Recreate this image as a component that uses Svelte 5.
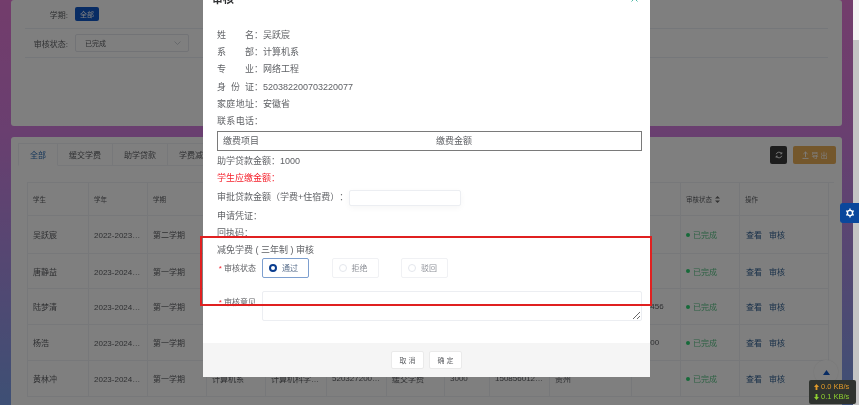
<script>
  const tabs = ['全部', '缓交学费', '助学贷款', '学费减免'];
  const heads = ['学生', '学年', '学期', '', '', '', '', '', '', '', ''];
  const rows = [
    { h: 38, c: ['吴跃宸', '2022-2023学年', '第二学期', '', '', '', '', '', '', '', ''] },
    { h: 35, c: ['唐静益', '2023-2024学年', '第一学期', '', '', '', '', '', '', '', ''] },
    { h: 36, c: ['陆梦清', '2023-2024学年', '第一学期', '', '', '', '', '', '', '', '123456'] },
    { h: 36, c: ['杨浩', '2023-2024学年', '第一学期', '', '', '', '', '', '', '', '10000'] },
    { h: 36, c: ['黄林冲', '2023-2024学年', '第一学期', '计算机系', '计算机科学与技术', '520327200012345678', '缓交学费', '3000', '15085601234567', '贵州', ''] }
  ];
  const info = [
    ['姓名', '吴跃宸'],
    ['系部', '计算机系'],
    ['专业', '网络工程'],
    ['身份证', '520382200703220077'],
    ['家庭地址', '安徽省'],
    ['联系电话', '']
  ];
  const options = ['通过', '拒绝', '驳回'];
</script>

<div class="page">
  <div class="main">
    <section class="card filters">
      <div class="filter-row">
        <span class="filter-label">学期:</span>
        <span class="chip">全部</span>
      </div>
      <div class="filter-row">
        <span class="filter-label">审核状态:</span>
        <span class="select">
          已完成
          <svg width="7" height="4" viewBox="0 0 7 4"><path d="M.5.5l3 3 3-3" fill="none" stroke="#c0c4cc" stroke-width=".8" /></svg>
        </span>
      </div>
    </section>

    <section class="card list">
      <div class="toolbar">
        <div class="tabs">
          {#each tabs as tab, i}
            <span class="tab" class:active={i === 0}>{tab}</span>
          {/each}
        </div>
        <div class="tools">
          <span class="refresh">
            <svg width="8" height="8" viewBox="0 0 8 8" fill="none" stroke="#fff" stroke-width=".9">
              <path d="M1.2 3.2A3 3 0 0 1 6.6 2.6M6.8 4.8A3 3 0 0 1 1.4 5.4" />
              <path d="M6.8 1.2v1.6H5.2M1.2 6.8V5.2h1.6" />
            </svg>
          </span>
          <span class="export">
            <svg width="7" height="8" viewBox="0 0 7 8" fill="none" stroke="#fff" stroke-width=".9"><path d="M3.5 6V1M1.4 3l2.1-2 2.1 2M.5 7.4h6" /></svg>
            导 出
          </span>
        </div>
      </div>

      <div class="table">
        <div class="tr head">
          {#each heads as h}
            <div class="td">{h}</div>
          {/each}
          <div class="td">
            审核状态
            <svg width="5" height="7" viewBox="0 0 5 7" fill="#666"><path d="M2.5 0L5 2.6H0zM2.5 7L0 4.4h5z" /></svg>
          </div>
          <div class="td">操作</div>
        </div>
        {#each rows as row}
          <div class="tr" style="height: {row.h}px">
            {#each row.c as cell}
              <div class="td"><span class="clip">{cell}</span></div>
            {/each}
            <div class="td"><i class="dot"></i><span class="done">已完成</span></div>
            <div class="td actions"><span>查看</span><span>审核</span></div>
          </div>
        {/each}
      </div>
    </section>

    <button class="back-top" aria-label="回到顶部">
      <svg width="7" height="5" viewBox="0 0 7 5"><path d="M3.5 0L7 5H0z" fill="#1058c8" /></svg>
    </button>

    <div class="mask"></div>

    <div class="modal">
      <header class="modal-head">
        <strong>审核</strong>
        <svg width="7" height="7" viewBox="0 0 7 7"><path d="M.5.5l6 6M6.5.5l-6 6" stroke="#4fb8a6" stroke-width="1" /></svg>
      </header>
      <div class="modal-body">
        {#each info as [k, v]}
          <div class="line"><span class="key">{k}</span>：{v}</div>
        {/each}
        <div class="fee-table">
          <span class="fee-a">缴费项目</span>
          <span>缴费金额</span>
        </div>
        <div class="line">助学贷款金额：1000</div>
        <div class="line red">学生应缴金额：</div>
        <div class="line approve"><span class="approve-label">审批贷款金额（学费+住宿费）：</span><input class="amount" /></div>
        <div class="line">申请凭证：</div>
        <div class="line">回执码：</div>
        <div class="line section">减免学费 ( 三年制 ) 审核</div>
        <div class="form-row">
          <span class="form-label"><b>*</b> 审核状态</span>
          <div class="radios">
            {#each options as o, i}
              <span class="radio" class:checked={i === 0}><i></i>{o}</span>
            {/each}
          </div>
        </div>
        <div class="form-row opinion">
          <span class="form-label"><b>*</b> 审核意见</span>
          <textarea></textarea>
        </div>
      </div>
      <footer class="modal-foot">
        <button>取 消</button>
        <button>确 定</button>
      </footer>
    </div>

    <div class="annotation"></div>
  </div>

  <div class="scrollbar"><div class="thumb"></div></div>

  <div class="gear">
    <svg width="10" height="10" viewBox="0 0 10 10">
      <circle cx="5" cy="5" r="2.6" fill="none" stroke="#fff" stroke-width="1.4" />
      <path d="M5 .6v1.6M5 7.8v1.6M1.2 2.8l1.4.8M7.4 6.4l1.4.8M1.2 7.2l1.4-.8M7.4 3.6l1.4-.8" stroke="#fff" stroke-width="1.3" />
    </svg>
  </div>

  <div class="speed">
    <div class="up"><svg width="5" height="6" viewBox="0 0 5 6"><path d="M2.5 0L5 3H3.4v3H1.6V3H0z" /></svg>0.0 KB/s</div>
    <div class="down"><svg width="5" height="6" viewBox="0 0 5 6"><path d="M2.5 6L0 3h1.6V0h1.8v3H5z" /></svg>0.1 KB/s</div>
  </div>
</div>

<style>
  :global(body) {
    overflow: hidden;
  }

  .page {
    display: flex;
    position: relative;
    height: 405px;
    overflow: hidden;
    font-family: "Liberation Sans", "Noto Sans CJK SC", sans-serif;
    color: #606266;
    filter: blur(.3px);
  }

  .main {
    flex: 1;
    position: relative;
    padding: 0 11px;
    overflow: hidden;
    background: linear-gradient(180deg, #e67ad8 0, #d47ee0 130px, #7ca0ea 405px);
  }

  .card {
    background: #fff;
    border-radius: 3px;
  }

  .filters {
    height: 126px;
    padding: 0 14px;
    box-sizing: border-box;
  }

  .filter-row {
    display: flex;
    align-items: center;
    gap: 7px;
    height: 29px;
    border-bottom: 1px solid #ebeef5;
    box-sizing: border-box;
  }

  .filter-label {
    width: 43px;
    flex: none;
    font-size: 8px;
    text-align: right;
    white-space: nowrap;
  }

  .chip {
    display: flex;
    align-items: center;
    justify-content: center;
    width: 24px;
    height: 14px;
    border-radius: 2px;
    background: #1058c8;
    color: #fff;
    font-size: 7px;
  }

  .select {
    display: flex;
    align-items: center;
    justify-content: space-between;
    width: 114px;
    height: 18px;
    padding: 0 7px 0 9px;
    border: 1px solid #e4e7ed;
    border-radius: 2px;
    box-sizing: border-box;
    font-size: 7px;
  }

  .list {
    height: 300px;
    margin-top: 11px;
    padding: 6px 6px 0 7px;
    box-sizing: border-box;
  }

  .toolbar {
    display: flex;
    justify-content: space-between;
    align-items: center;
    height: 23px;
  }

  .tabs {
    display: flex;
    height: 100%;
  }

  .tab {
    display: flex;
    align-items: center;
    padding: 0 11px;
    border: 1px solid #eef0f5;
    border-left: none;
    box-sizing: border-box;
    font-size: 8px;
    white-space: nowrap;
  }

  .tab.active {
    border-left: 1px solid #eef0f5;
    border-bottom-color: transparent;
    color: #2f6fb5;
  }

  .tools {
    display: flex;
    gap: 6px;
  }

  .refresh,
  .export {
    display: flex;
    align-items: center;
    justify-content: center;
    height: 18px;
    border-radius: 2px;
  }

  .refresh {
    width: 17px;
    background: #3a3a3a;
  }

  .export {
    gap: 3px;
    width: 43px;
    background: #e6a03c;
    color: #fff;
    font-size: 7px;
    opacity: .85;
  }

  .table {
    margin: 16px 2px 0 9px;
    border-top: 1px solid #eef0f5;
    border-left: 1px solid #eef0f5;
  }

  .tr {
    display: grid;
    grid-template-columns: 61px 59px 59px 59px 61px 60px 58px 45px 60px 82px 49px 59px 89px;
    height: 36px;
    box-sizing: border-box;
    font-size: 8px;
  }

  .tr.head {
    height: 33px;
    font-size: 6.5px;
  }

  .td {
    display: flex;
    align-items: center;
    gap: 3px;
    min-width: 0;
    padding: 0 5px;
    border-right: 1px solid #eef0f5;
    border-bottom: 1px solid #eef0f5;
    box-sizing: border-box;
    white-space: nowrap;
  }

  .clip {
    overflow: hidden;
    text-overflow: ellipsis;
  }

  .dot {
    width: 4px;
    height: 4px;
    border-radius: 50%;
    background: #2ed573;
  }

  .done {
    color: #5fc48a;
  }

  .actions {
    gap: 7px;
    padding-left: 6px;
    color: #2f5f92;
  }

  .back-top {
    position: absolute;
    right: 15px;
    top: 360px;
    display: flex;
    align-items: center;
    justify-content: center;
    width: 24px;
    height: 24px;
    padding: 0;
    border: none;
    border-radius: 50%;
    background: #fff;
    box-shadow: 0 0 2px rgba(0, 0, 0, .1);
  }

  .mask {
    position: absolute;
    inset: 0;
    background: rgba(0, 0, 0, .5);
  }

  .modal {
    position: absolute;
    left: 203px;
    top: -13px;
    display: flex;
    flex-direction: column;
    width: 447px;
    height: 390px;
    background: #fff;
  }

  .modal-head {
    display: flex;
    justify-content: space-between;
    align-items: center;
    height: 28px;
    padding: 0 12px 6px 9px;
    flex: none;
    box-sizing: border-box;
    font-size: 11px;
    color: #303133;
  }

  .modal-body {
    flex: 1;
    padding: 11.5px 8px 0 14px;
    font-size: 9px;
  }

  .line {
    height: 17.4px;
    line-height: 17.4px;
    white-space: nowrap;
  }

  .key {
    display: inline-block;
    width: 37px;
    text-align-last: justify;
  }

  .red {
    color: #f5222d;
  }

  .fee-table {
    display: flex;
    align-items: center;
    height: 20px;
    margin: 0 0 2.2px;
    padding: 0 5px;
    border: 1px solid #7a7a7a;
    box-sizing: border-box;
  }

  .fee-a {
    width: 213px;
  }

  .approve {
    display: flex;
    align-items: center;
    height: 20px;
  }

  .approve-label {
    width: 132px;
    flex: none;
    text-spacing-trim: space-all;
  }

  .amount {
    width: 112px;
    height: 16px;
    padding: 0;
    border: 1px solid #eceef2;
    border-radius: 2px;
    box-sizing: border-box;
    outline: none;
    box-shadow: 0 2px 6px rgba(0, 0, 0, .04);
  }

  .section {
    height: 15.4px;
    line-height: 15.4px;
  }

  .form-row {
    display: flex;
    gap: 6px;
    font-size: 8px;
  }

  .form-label {
    width: 39px;
    flex: none;
    padding-top: 4px;
    text-align: right;
    white-space: nowrap;
  }

  .form-label b {
    color: #f5222d;
    font-weight: 400;
  }

  .radios {
    display: flex;
    gap: 22.5px;
    height: 20px;
  }

  .radio {
    display: flex;
    align-items: center;
    gap: 5px;
    width: 47px;
    padding-left: 6px;
    border: 1px solid #f0f1f4;
    border-radius: 2px;
    box-sizing: border-box;
    color: #8c8f96;
    font-size: 8px;
  }

  .radio i {
    width: 8px;
    height: 8px;
    border: 1px solid #e4e7ed;
    border-radius: 50%;
    box-sizing: border-box;
  }

  .radio.checked {
    border-color: #7d9fcf;
    color: #5a6f8c;
  }

  .radio.checked i {
    border: 2.5px solid #0a3d8f;
  }

  .opinion {
    margin-top: 13px;
  }

  .opinion .form-label {
    padding-top: 5px;
  }

  textarea {
    width: 380px;
    height: 30px;
    padding: 0;
    border: 1px solid #eceef2;
    border-radius: 2px;
    box-sizing: border-box;
    outline: none;
    resize: vertical;
  }

  .modal-foot {
    display: flex;
    flex: none;
    justify-content: center;
    align-items: center;
    gap: 5px;
    height: 34px;
    background: #f5f5f5;
  }

  .modal-foot button {
    width: 33px;
    height: 18px;
    padding: 0;
    border: 1px solid #eaeaea;
    border-radius: 2px;
    background: #fff;
    color: #606266;
    font-family: inherit;
    font-size: 7px;
  }

  .annotation {
    position: absolute;
    left: 200px;
    top: 236px;
    width: 452px;
    height: 70px;
    border: 2px solid #e02020;
    box-sizing: border-box;
  }

  .scrollbar {
    width: 6px;
    flex: none;
    padding-top: 40px;
    box-sizing: border-box;
    background: #f4f4f4;
  }

  .thumb {
    height: 100%;
    background: #c4c4c4;
  }

  .gear {
    position: absolute;
    right: 0;
    top: 203px;
    display: flex;
    align-items: center;
    justify-content: center;
    width: 19px;
    height: 20px;
    border-radius: 3px 0 0 3px;
    background: #0a479c;
  }

  .speed {
    position: absolute;
    left: 809px;
    top: 380px;
    width: 47px;
    height: 24px;
    padding: 2px 0 0 5px;
    border-radius: 2px;
    box-sizing: border-box;
    background: #2f332f;
    font-size: 7.5px;
    line-height: 10px;
  }

  .speed div {
    display: flex;
    align-items: center;
    gap: 2px;
    white-space: nowrap;
  }

  .up {
    color: #e09a2a;
    fill: #e09a2a;
  }

  .down {
    color: #8fd12f;
    fill: #8fd12f;
  }
</style>
